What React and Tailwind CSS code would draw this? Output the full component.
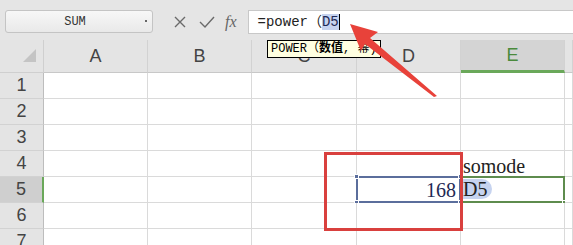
import React from "react";

const cols = ["A", "B", "C", "D", "E", ""];
const rows = [1, 2, 3, 4, 5, 6, 7];

const Handle = ({ className }) => (
  <span className={`absolute w-[5px] h-[5px] bg-[#5b6e9c] border border-white ${className}`} />
);

const serif = { fontFamily: '"Liberation Serif", serif' };

const Cell = ({ col, row }) => {
  const base = "relative border-r border-b border-[#dadada] bg-white";
  if (col === "E" && row === 4) {
    return (
      <div className={`${base} flex items-end pl-[2px] overflow-visible`}>
        <span className="text-[20px] leading-none text-[#222] whitespace-nowrap" style={serif}>
          somode
        </span>
      </div>
    );
  }
  if (col === "D" && row === 5) {
    return (
      <div className={`${base} bg-[#c6d3ef] flex items-end justify-end pr-[4px] pb-[2px]`}>
        <div className="absolute -left-[1px] -top-[1px] -right-[1px] -bottom-[1px] border-2 border-[#5b6e9c]" />
        <Handle className="-left-[3px] -top-[3px]" />
        <Handle className="-right-[3px] -top-[3px]" />
        <Handle className="-left-[3px] -bottom-[3px]" />
        <Handle className="-right-[3px] -bottom-[3px]" />
        <span className="text-[20px] leading-none text-[#1f2a55]" style={serif}>
          168
        </span>
      </div>
    );
  }
  if (col === "E" && row === 5) {
    return (
      <div className={`${base} flex items-end pl-[2px] pb-[3px]`}>
        <div className="absolute -left-[1px] -top-[1px] -right-[1px] -bottom-[1px] border-2 border-[#5e8c4e]" />
        <span className="absolute -right-[3px] -bottom-[3px] w-[5px] h-[5px] bg-[#5e8c4e] border border-white" />
        <span className="text-[20px] leading-none text-[#222] bg-[#c6d3ef] rounded-r-full pr-[5px]" style={serif}>
          D5
        </span>
      </div>
    );
  }
  return <div className={base} />;
};

export default function App() {
  return (
    <div className="relative w-[573px] h-[245px] overflow-hidden bg-white" style={{ fontFamily: '"Liberation Sans", Arial, sans-serif' }}>
      {/* formula toolbar */}
      <div className="h-[40px] bg-[#e5e5e5] flex items-start pt-[10px]">
        <div className="ml-[5px] w-[148px] h-[23px] rounded-[3px] border border-[#c4c4c4] bg-gradient-to-b from-[#f7f7f7] to-[#e9e9e9] relative flex items-center justify-center">
          <span className="text-[12px] text-[#333] -ml-[8px]" style={{ fontFamily: '"Liberation Mono", monospace' }}>SUM</span>
          <span className="absolute right-[5px] top-[9px] w-[2px] h-[2px] bg-[#666]" />
        </div>
        <div className="flex items-center h-[23px] ml-[20px] gap-[12px] text-[#666]">
          <svg width="14" height="14" viewBox="0 0 14 14"><path d="M2 2 L12 12 M12 2 L2 12" stroke="#6a6a6a" strokeWidth="1.4" fill="none" /></svg>
          <svg width="16" height="14" viewBox="0 0 16 14"><path d="M1 7 L6 12 L15 2" stroke="#6a6a6a" strokeWidth="1.4" fill="none" /></svg>
          <span className="italic text-[16px] text-[#666] -ml-[2px]" style={serif}>fx</span>
        </div>
        <div className="ml-[11px] flex-1 h-[24px] bg-white border border-[#c8c8c8] border-r-0 flex items-center pl-[9px]">
          <span className="text-[14px] text-[#222] whitespace-nowrap" style={{ fontFamily: '"Liberation Mono", "Noto Sans CJK SC", monospace' }}>
            =power（<span className="bg-[#c6d3ef] text-[#1f2a55]">D5</span>
          </span>
          <span className="w-[1px] h-[16px] bg-black" />
        </div>
      </div>

      {/* sheet grid */}
      <div className="grid grid-cols-[44px_104px_104px_105px_104px_104px_1fr] grid-rows-[33px_repeat(7,26px)]">
        <div className="bg-[#e4e4e4] border-r border-b border-[#cfcfcf] flex items-end justify-end pr-[7px] pb-[10px]">
          <svg width="13" height="13" viewBox="0 0 13 13"><path d="M13 0 L13 13 L0 13 Z" fill="#c4c4c4" /></svg>
        </div>
        {cols.map((c) => (
          <div
            key={c || "F"}
            className={`flex items-center justify-center text-[18px] border-r border-[#d2d2d2] ${
              c === "E" ? "bg-[#d4d4d4] text-[#4a8a3c] border-b-[3px] border-b-[#6aa85a]" : "bg-[#e4e4e4] text-[#444] border-b border-b-[#c8c8c8]"
            }`}
          >
            {c}
          </div>
        ))}
        {rows.map((r) => (
          <React.Fragment key={r}>
            <div
              className={`flex items-center justify-center text-[18px] text-[#444] border-b border-b-[#d2d2d2] ${
                r === 5 ? "bg-[#cfcfcf] border-r-2 border-r-[#6aa85a]" : "bg-[#e4e4e4] border-r border-r-[#bdbdbd]"
              }`}
            >
              {r}
            </div>
            {cols.map((c) => (
              <Cell key={c + r} col={c} row={r} />
            ))}
          </React.Fragment>
        ))}
      </div>

      {/* function tooltip */}
      <div className="absolute left-[267px] top-[40px] h-[18px] px-[3px] bg-[#ffffe1] border border-black flex items-center whitespace-nowrap text-[12px] text-black" style={{ fontFamily: '"Liberation Mono", "Noto Sans CJK SC", monospace' }}>
        POWER（<b>数值</b>,&nbsp;幂)
      </div>

      {/* red annotation box */}
      <div className="absolute left-[324px] top-[152px] w-[139px] h-[79px] border-[3px] border-[#d9403e]" />

      {/* red arrow */}
      <svg className="absolute left-0 top-0 pointer-events-none" width="573" height="245" viewBox="0 0 573 245">
        <path d="M350 24 L378 32 L370 38 L437 96 L434 97 L365 44 L361 51 Z" fill="#e8423a" />
      </svg>
    </div>
  );
}
